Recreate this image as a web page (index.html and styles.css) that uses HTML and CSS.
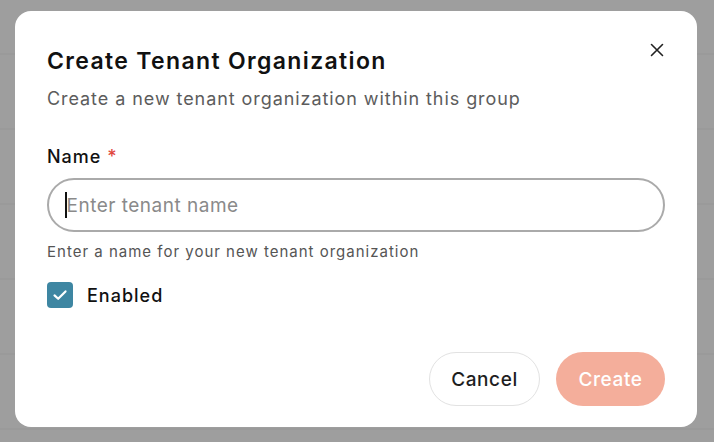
FILE: index.html
```html
<!DOCTYPE html>
<html lang="en">
<head>
<meta charset="utf-8">
<title>Create Tenant Organization</title>
<link rel="stylesheet" href="styles.css">
</head>
<body>
<div class="backdrop">
  <div class="modal" role="dialog" aria-labelledby="dlg-title">
    <button class="close" aria-label="Close">
      <svg width="14" height="14" viewBox="0 0 14 14" fill="none" stroke="#222" stroke-width="1.6" stroke-linecap="round"><path d="M1.5 1.5L12.5 12.5M12.5 1.5L1.5 12.5"/></svg>
    </button>
    <header class="head">
      <h2 id="dlg-title" class="title">Create Tenant Organization</h2>
      <p class="subtitle">Create a new tenant organization within this group</p>
    </header>
    <div class="field">
      <label class="label" for="tname">Name <span class="req">*</span></label>
      <div class="input"><span class="caret"></span><span class="placeholder">Enter tenant name</span></div>
      <p class="help">Enter a name for your new tenant organization</p>
    </div>
    <label class="check">
      <span class="box"><svg width="18" height="18" viewBox="0 0 18 18" fill="none" stroke="#fff" stroke-width="2.2" stroke-linecap="round" stroke-linejoin="round"><path d="M3.5 9.4L7.2 12.8L14.5 5.4"/></svg></span>
      <span class="check-label">Enabled</span>
    </label>
    <div class="actions">
      <button class="btn btn-cancel">Cancel</button>
      <button class="btn btn-create">Create</button>
    </div>
  </div>
</div>
</body>
</html>
```
FILE: styles.css
```css
* { box-sizing: border-box; }
html, body { margin: 0; padding: 0; }
body {
  font-family: "Inter", "Open Sans", sans-serif;
  background: #9e9e9e;
}
.backdrop {
  width: 714px;
  height: 442px;
  padding: 11px 17px 15px 15px;
  background:
    repeating-linear-gradient(to bottom, transparent 0, transparent 53px, #9a9a9a 53px, #9a9a9a 55px, transparent 55px, transparent 75px),
    #9e9e9e;
}
.modal {
  position: relative;
  width: 682px;
  height: 416px;
  background: #fff;
  border-radius: 16px;
  padding: 35px 32px 21px 32px;
  display: flex;
  flex-direction: column;
}
.close {
  position: absolute;
  top: 32px;
  right: 33px;
  width: 14px;
  height: 14px;
  padding: 0;
  border: 0;
  background: none;
  display: flex;
}
.title {
  margin: 0;
  font-size: 23px;
  font-weight: 600;
  line-height: 30px;
  color: #111;
  letter-spacing: 1.35px;
}
.subtitle {
  margin: 10px 0 0;
  font-size: 18px;
  line-height: 26px;
  color: #5c5c5c;
  letter-spacing: 0.93px;
}
.field { margin-top: 33px; }
.label {
  display: block;
  font-size: 18px;
  font-weight: 500;
  line-height: 24px;
  color: #111;
  letter-spacing: 1px;
}
.req { color: #e0483e; }
.input {
  margin-top: 9px;
  height: 54px;
  border: 2px solid #aaa;
  border-radius: 27px;
  display: flex;
  align-items: center;
  padding-left: 16px;
}
.caret {
  width: 1.5px;
  height: 26px;
  background: #111;
}
.placeholder {
  font-size: 19px;
  color: #8a8a8a;
  letter-spacing: 0.5px;
}
.help {
  margin: 10px 0 0;
  font-size: 15px;
  line-height: 20px;
  color: #555;
  letter-spacing: 1px;
}
.check {
  margin-top: 20px;
  display: flex;
  align-items: center;
  gap: 14px;
}
.box {
  width: 26px;
  height: 26px;
  border-radius: 4px;
  background: #3e86a2;
  display: flex;
  align-items: center;
  justify-content: center;
}
.check-label {
  font-size: 18px;
  font-weight: 500;
  color: #111;
  letter-spacing: 1px;
}
.actions {
  margin-top: auto;
  display: flex;
  justify-content: flex-end;
  gap: 16px;
}
.btn {
  height: 54px;
  border-radius: 27px;
  font-family: inherit;
  font-size: 19px;
  font-weight: 500;
  padding: 0;
  letter-spacing: 0.6px;
}
.btn-cancel {
  width: 111px;
  background: #fff;
  border: 1px solid #e2e2e2;
  color: #1e1e1e;
}
.btn-create {
  width: 109px;
  background: #f4ae9b;
  border: 0;
  color: #fff;
}
```
